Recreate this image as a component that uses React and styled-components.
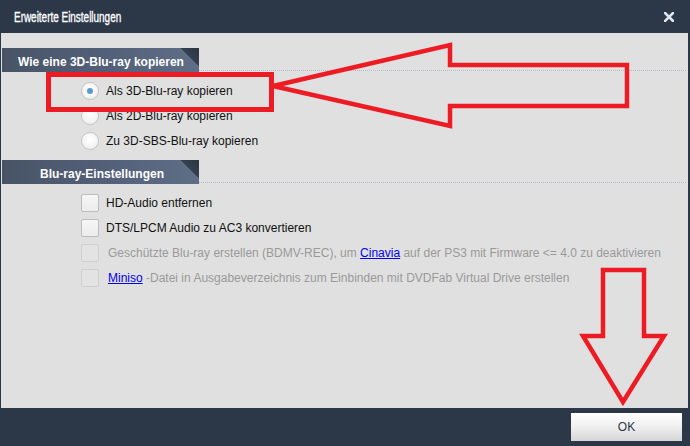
import React from "react";
import styled, { createGlobalStyle } from "styled-components";

const Global = createGlobalStyle`
  html, body { margin: 0; padding: 0; background: #2c3748; }
  body { font-family: "Liberation Sans", Arial, sans-serif; }
  #root { width: 690px; height: 446px; }
`;

const Window = styled.div`
  position: relative;
  width: 690px;
  height: 446px;
  background: #2c3748;
  display: flex;
  flex-direction: column;
  overflow: hidden;
`;

const TitleBar = styled.div`
  height: 33px;
  flex: none;
  display: flex;
  align-items: center;
  justify-content: space-between;
  padding: 0 16px 0 14px;
  color: #ffffff;
`;

const Title = styled.span`
  display: inline-block;
  font-family: "Liberation Sans", Arial, sans-serif;
  font-size: 14px;
  transform: scaleX(0.71);
  transform-origin: left center;
  -webkit-text-stroke: 0.35px #ffffff;
  padding-top: 1px;
`;

const CloseIcon = styled.svg`
  display: block;
  width: 10px;
  height: 10px;
  margin-top: 1px;
`;

const Content = styled.div`
  flex: 1;
  margin: 0 2px 0 1px;
  background: #e0e0e0;
  padding-top: 15px;
  display: flex;
  flex-direction: column;
`;

const SectionHead = styled.div`
  display: flex;
  align-items: stretch;
  height: 24px;
  padding-left: 1px;
`;

const Tab = styled.div`
  width: 197px;
  flex: none;
  box-sizing: border-box;
  padding-left: ${(p) => p.$indent}px;
  display: flex;
  align-items: center;
  padding-top: 4px;
  color: #ffffff;
  font-weight: bold;
  font-size: 12px;
  background:
    linear-gradient(to bottom left, #2a3545 0%, #36414f 50%, transparent 50%) top right / 19px 18px no-repeat,
    linear-gradient(to right, #485466 0%, #53607a 55%, #5f6f86 100%);
`;

const Dots = styled.div`
  flex: 1;
  border-bottom: 1px dotted #b3bcc8;
  margin-bottom: 1px;
  margin-right: 2px;
`;

const List = styled.div`
  display: flex;
  flex-direction: column;
  padding: 6px 0 7px 80px;
`;

const Row = styled.label`
  height: 25px;
  display: flex;
  align-items: center;
  gap: 7px;
  font-size: 12px;
  color: ${(p) => (p.$disabled ? "#9a9a9a" : "#111111")};
  white-space: nowrap;
`;

const Radio = styled.span`
  width: 18px;
  height: 18px;
  box-sizing: border-box;
  border-radius: 50%;
  border: 1px solid #c6c6c6;
  background: radial-gradient(circle at 50% 40%, #ffffff 0%, #f4f4f4 60%, #e6e6e6 100%);
  display: flex;
  align-items: center;
  justify-content: center;
  flex: none;
  &::after {
    content: "";
    width: 6px;
    height: 6px;
    border-radius: 50%;
    background: ${(p) => (p.$checked ? "#5b98cf" : "transparent")};
  }
`;

const Check = styled.span`
  width: 18px;
  height: 18px;
  box-sizing: border-box;
  border-radius: 2px;
  border: 1px solid ${(p) => (p.$disabled ? "#d0d0d0" : "#bcbcbc")};
  background: ${(p) => (p.$disabled ? "#e3e3e3" : "linear-gradient(#f6f6f6, #ececec)")};
  flex: none;
`;

const Text = styled.span`
  padding-left: ${(p) => (p.$shift ? 2 : 0)}px;
`;

const Link = styled.a`
  color: #0000ee;
  text-decoration: underline;
`;

const Footer = styled.div`
  height: 38px;
  flex: none;
  display: flex;
  justify-content: flex-end;
  align-items: flex-start;
  padding: 5px 8px 0 0;
  box-sizing: border-box;
`;

const OkButton = styled.button`
  width: 111px;
  height: 28px;
  border: none;
  border-radius: 0;
  background: linear-gradient(#ffffff 0%, #f1f1f1 45%, #d6d6d6 100%);
  color: #2c3748;
  font-family: "Liberation Sans", Arial, sans-serif;
  font-size: 12px;
  padding: 0;
`;

const Overlay = styled.svg`
  position: absolute;
  left: 0;
  top: 0;
  width: 690px;
  height: 446px;
  pointer-events: none;
`;

const RED = "#ed1c24";

export default function App() {
  return (
    <Window>
      <Global />
      <TitleBar>
        <Title>Erweiterte Einstellungen</Title>
        <CloseIcon viewBox="0 0 10 10">
          <path d="M1 1 L9 9 M9 1 L1 9" stroke="#dfe6f0" strokeWidth="2.6" strokeLinecap="square" />
        </CloseIcon>
      </TitleBar>
      <Content>
        <SectionHead>
          <Tab $indent={16}>Wie eine 3D-Blu-ray kopieren</Tab>
          <Dots />
        </SectionHead>
        <List>
          <Row>
            <Radio $checked />
            <Text>Als 3D-Blu-ray kopieren</Text>
          </Row>
          <Row>
            <Radio />
            <Text>Als 2D-Blu-ray kopieren</Text>
          </Row>
          <Row>
            <Radio />
            <Text>Zu 3D-SBS-Blu-ray kopieren</Text>
          </Row>
        </List>
        <SectionHead>
          <Tab $indent={38}>Blu-ray-Einstellungen</Tab>
          <Dots />
        </SectionHead>
        <List>
          <Row>
            <Check />
            <Text>HD-Audio entfernen</Text>
          </Row>
          <Row>
            <Check />
            <Text>DTS/LPCM Audio zu AC3 konvertieren</Text>
          </Row>
          <Row $disabled>
            <Check $disabled />
            <Text $shift>
              Geschützte Blu-ray erstellen (BDMV-REC), um <Link>Cinavia</Link> auf der PS3 mit Firmware &lt;= 4.0 zu deaktivieren
            </Text>
          </Row>
          <Row $disabled>
            <Check $disabled />
            <Text $shift>
              <Link>Miniso</Link> -Datei in Ausgabeverzeichnis zum Einbinden mit DVDFab Virtual Drive erstellen
            </Text>
          </Row>
        </List>
      </Content>
      <Footer>
        <OkButton>OK</OkButton>
      </Footer>
      <Overlay viewBox="0 0 690 446">
        <rect x="48.5" y="74.5" width="223" height="35" fill="none" stroke={RED} strokeWidth="5" />
        <polygon
          points="273,86 450,45 450,65 627,65 627,106 450,106 450,126"
          fill="none"
          stroke={RED}
          strokeWidth="4.5"
          strokeLinejoin="miter"
        />
        <polygon
          points="603,270 644,270 644,336 664,336 623,402 583,336 603,336"
          fill="none"
          stroke={RED}
          strokeWidth="4.5"
          strokeLinejoin="miter"
        />
      </Overlay>
    </Window>
  );
}
